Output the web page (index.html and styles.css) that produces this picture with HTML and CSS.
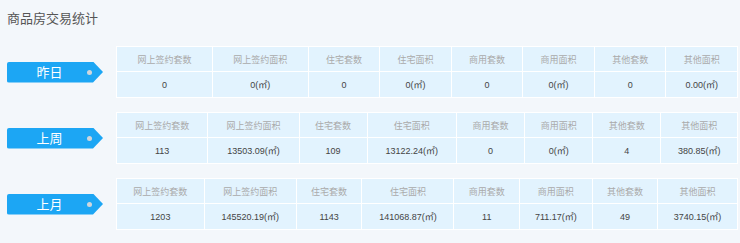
FILE: index.html
```html
<!DOCTYPE html>
<html lang="zh-CN">
<head>
<meta charset="utf-8">
<title>商品房交易统计</title>
<link rel="stylesheet" href="styles.css">
</head>
<body>
<div class="panel">
  <h1 class="title">商品房交易统计</h1>
  <div class="rows">
    <div class="row">
      <div class="tag"><span class="tag-text">昨日</span><span class="dot"></span></div>
      <table class="stats">
        <tr><th>网上签约套数</th><th>网上签约面积</th><th>住宅套数</th><th>住宅面积</th><th>商用套数</th><th>商用面积</th><th>其他套数</th><th>其他面积</th></tr>
        <tr><td>0</td><td>0(㎡)</td><td>0</td><td>0(㎡)</td><td>0</td><td>0(㎡)</td><td>0</td><td>0.00(㎡)</td></tr>
      </table>
    </div>
    <div class="row">
      <div class="tag"><span class="tag-text">上周</span><span class="dot"></span></div>
      <table class="stats">
        <tr><th>网上签约套数</th><th>网上签约面积</th><th>住宅套数</th><th>住宅面积</th><th>商用套数</th><th>商用面积</th><th>其他套数</th><th>其他面积</th></tr>
        <tr><td>113</td><td>13503.09(㎡)</td><td>109</td><td>13122.24(㎡)</td><td>0</td><td>0(㎡)</td><td>4</td><td>380.85(㎡)</td></tr>
      </table>
    </div>
    <div class="row">
      <div class="tag"><span class="tag-text">上月</span><span class="dot"></span></div>
      <table class="stats">
        <tr><th>网上签约套数</th><th>网上签约面积</th><th>住宅套数</th><th>住宅面积</th><th>商用套数</th><th>商用面积</th><th>其他套数</th><th>其他面积</th></tr>
        <tr><td>1203</td><td>145520.19(㎡)</td><td>1143</td><td>141068.87(㎡)</td><td>11</td><td>711.17(㎡)</td><td>49</td><td>3740.15(㎡)</td></tr>
      </table>
    </div>
  </div>
</div>
</body>
</html>
```
FILE: styles.css
```css
html, body {
  margin: 0;
  padding: 0;
  background: #f3f7fb;
}
body {
  font-family: "Liberation Sans", "Noto Sans CJK SC", sans-serif;
  width: 740px;
  height: 243px;
  overflow: hidden;
}
.panel {
  padding: 10px 2px 0 7px;
}
.title {
  margin: 0;
  font-size: 13px;
  line-height: 18px;
  font-weight: normal;
  color: #555;
}
.rows {
  margin-top: 18px;
  display: flex;
  flex-direction: column;
  gap: 14px;
}
.row {
  display: flex;
  align-items: center;
  gap: 13px;
}
.tag {
  flex: none;
  width: 96px;
  height: 21px;
  display: flex;
  align-items: center;
  background: #1ca6f4;
  border-radius: 2px 0 0 2px;
  clip-path: polygon(0 0, 86px 0, 100% 50%, 86px 100%, 0 100%);
  color: #fff;
  padding-left: 5px;
  box-sizing: border-box;
}
.tag-text {
  flex: 1;
  text-align: center;
  font-size: 13px;
  line-height: 21px;
}
.dot {
  width: 5px;
  height: 5px;
  border-radius: 50%;
  background: #cfd6dc;
  margin-right: 11px;
}
.stats {
  flex: 1;
  border-collapse: collapse;
  background: #e2f3fe;
}
.stats th, .stats td {
  border: 1px solid #fff;
  text-align: center;
  padding: 0 8px;
  white-space: nowrap;
  font-size: 9px;
}
.stats th {
  height: 24px;
  font-weight: normal;
  color: #aaa;
}
.stats td {
  height: 25px;
  color: #444;
}
```
